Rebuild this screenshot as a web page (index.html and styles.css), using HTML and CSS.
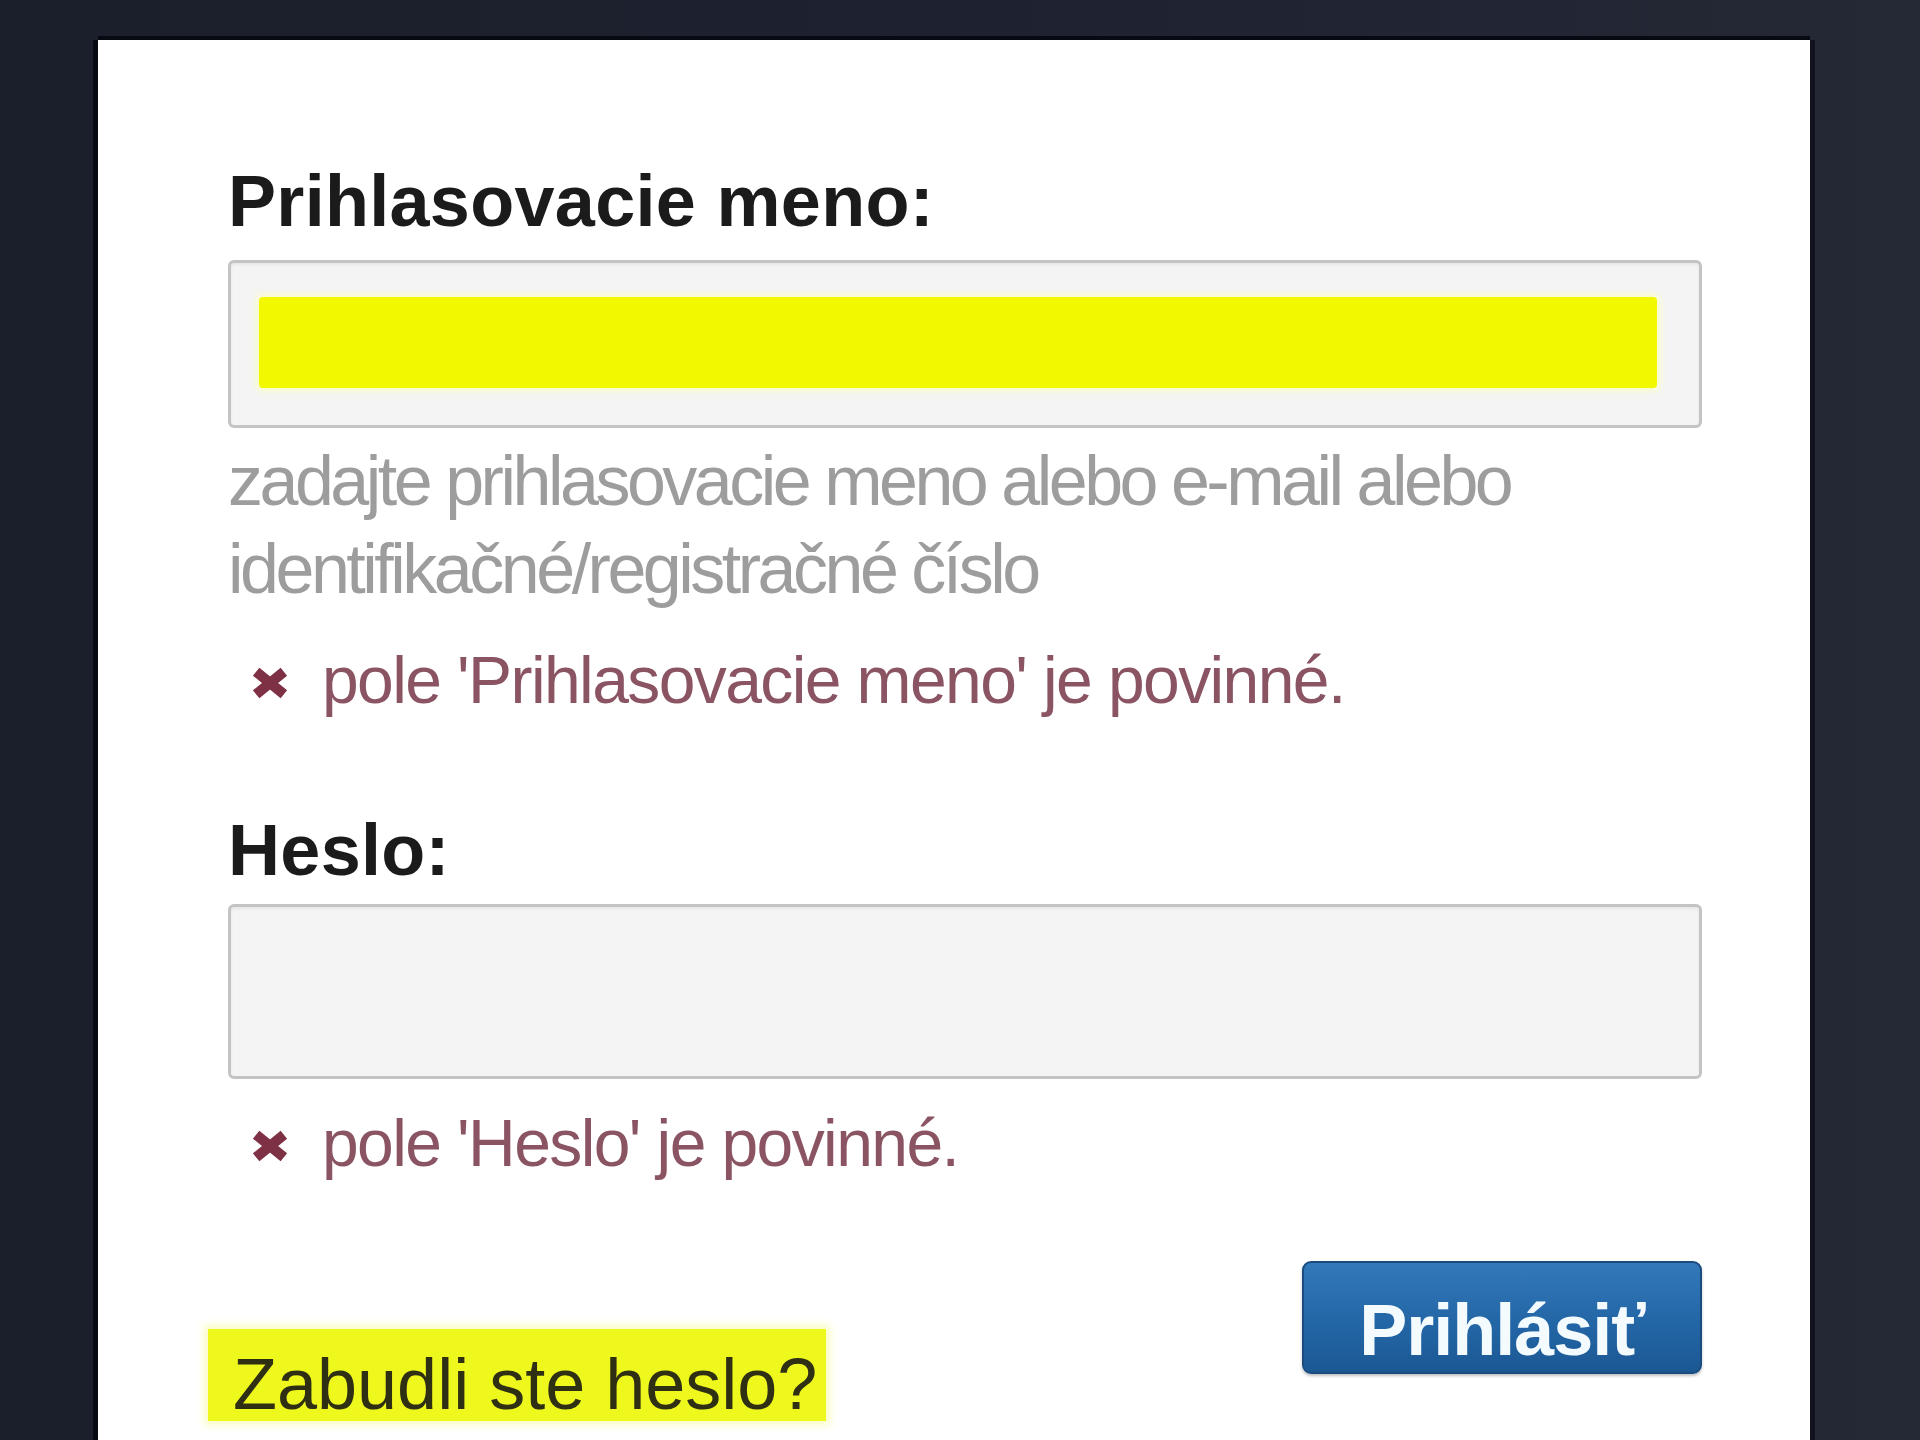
FILE: index.html
```html
<!DOCTYPE html>
<html lang="sk">
<head>
  <meta charset="UTF-8" />
  <meta name="viewport" content="width=device-width, initial-scale=1.0" />
  <title>Prihlásenie</title>
  <link rel="stylesheet" href="styles.css">
</head>
<body>
  <div class="card">
    <form class="login" onsubmit="return false;">
      <label class="field-label">Prihlasovacie meno:</label>
      <div class="field field-user"><span class="redact"></span></div>
      <p class="hint">zadajte prihlasovacie meno alebo e-mail alebo<br>identifikačné/registračné číslo</p>
      <p class="error error-user">
        <svg class="error-icon" viewBox="0 0 37 30"><path d="M5 4 L32 26 M32 4 L5 26" /></svg>
        <span>pole 'Prihlasovacie meno' je povinné.</span>
      </p>

      <label class="field-label field-label-pass">Heslo:</label>
      <div class="field field-pass"></div>
      <p class="error error-pass">
        <svg class="error-icon" viewBox="0 0 37 30"><path d="M5 4 L32 26 M32 4 L5 26" /></svg>
        <span>pole 'Heslo' je povinné.</span>
      </p>

      <div class="actions">
        <a class="forgot" href="#">Zabudli ste heslo?</a>
        <button class="submit" type="submit">Prihlásiť</button>
      </div>
    </form>
  </div>
</body>
</html>
```

FILE: styles.css
```css
html, body {
  height: 100%;
}

body {
  margin: 0;
  padding-top: 40px;
  box-sizing: border-box;
  height: 1440px;
  overflow: hidden;
  font-family: "Liberation Sans", Arial, sans-serif;
  background: linear-gradient(90deg, #1b1f2b 0%, #1e2230 50%, #252936 100%);
}

.card {
  margin-left: 98px;
  width: 1712px;
  min-height: 1500px;
  box-sizing: border-box;
  padding: 125px 108px 0 130px;
  background: #fff;
  box-shadow: 0 -4px 0 #070a12, -5px 0 0 #070a12, 5px 0 0 #10131c;
}

.login {
  display: flex;
  flex-direction: column;
}

.field-label {
  display: block;
  font-size: 72px;
  line-height: 72px;
  font-weight: bold;
  color: #1b1b1b;
  letter-spacing: 0.3px;
}

.field-label-pass {
  margin-top: 94px;
}

.field {
  box-sizing: border-box;
  border: 3px solid #c4c4c4;
  border-radius: 6px;
  background: #f4f4f4;
  box-shadow: inset 0 2px 3px rgba(0, 0, 0, 0.06);
}

.field-user {
  margin-top: 23px;
  height: 168px;
  padding: 34px 42px 0 28px;
}

.redact {
  display: block;
  height: 91px;
  background: #f2f800;
  border-radius: 4px;
  box-shadow: 0 0 6px 3px #fbfdc8;
}

.field-pass {
  margin-top: 18px;
  height: 175px;
}

.hint {
  margin: 9px 0 0;
  font-size: 70px;
  line-height: 88px;
  letter-spacing: -3.5px;
  color: #9d9d9d;
}

.error {
  display: flex;
  align-items: center;
  gap: 33px;
  margin: 27px 0 0;
  padding-left: 23px;
  font-size: 66px;
  line-height: 80px;
  letter-spacing: -1.6px;
  color: #8a5463;
}

.error-pass {
  margin-top: 24px;
}

.error-icon {
  width: 38px;
  height: 32px;
  flex-shrink: 0;
  margin-top: 6px;
}

.error-icon path {
  stroke: #7e3045;
  stroke-width: 10;
  fill: none;
}

.actions {
  display: flex;
  justify-content: space-between;
  align-items: flex-start;
  margin-top: 78px;
}

.forgot {
  display: inline-block;
  box-sizing: border-box;
  height: 92px;
  margin: 68px 0 0 -20px;
  padding: 19px 9px 0 25px;
  font-size: 72px;
  line-height: 72px;
  color: #2f2f14;
  text-decoration: none;
  background: #eff81c;
  box-shadow: 0 0 8px 4px #fafcc0;
}

.submit {
  box-sizing: border-box;
  width: 400px;
  height: 113px;
  padding: 24px 0 0;
  border: 2px solid #1a4c80;
  border-radius: 9px;
  background: linear-gradient(#3379ba, #2366a6 55%, #1b5893);
  font-family: "Liberation Sans", Arial, sans-serif;
  font-size: 72px;
  line-height: 72px;
  font-weight: bold;
  color: #f4fbff;
  text-align: center;
  letter-spacing: -1px;
  cursor: pointer;
  box-shadow: 0 2px 3px rgba(0, 0, 0, 0.25);
}
```
